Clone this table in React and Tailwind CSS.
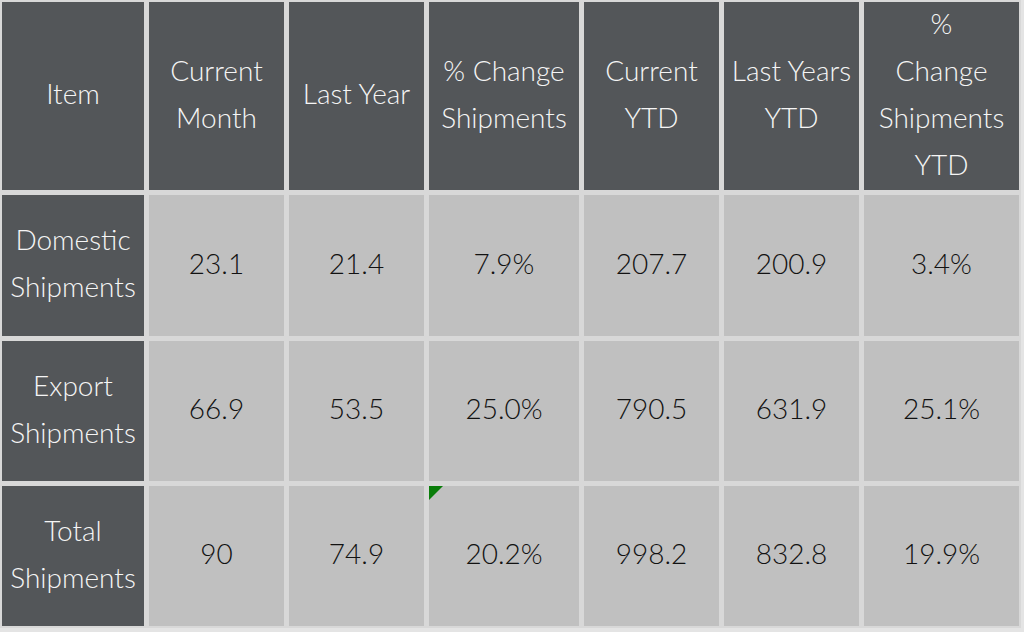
const headers = [
  ['Item'],
  ['Current', 'Month'],
  ['Last Year'],
  ['% Change', 'Shipments'],
  ['Current', 'YTD'],
  ['Last Years', 'YTD'],
  ['%', 'Change', 'Shipments', 'YTD'],
];

const rows = [
  { label: ['Domestic', 'Shipments'], values: ['23.1', '21.4', '7.9%', '207.7', '200.9', '3.4%'] },
  { label: ['Export', 'Shipments'], values: ['66.9', '53.5', '25.0%', '790.5', '631.9', '25.1%'] },
  { label: ['Total', 'Shipments'], values: ['90', '74.9', '20.2%', '998.2', '832.8', '19.9%'], flag: true },
];

function Lines({ lines }) {
  return (
    <div className="flex flex-col items-center">
      {lines.map((line) => (
        <span key={line} className="whitespace-nowrap">
          {line}
        </span>
      ))}
    </div>
  );
}

export default function App() {
  return (
    <div
      className="h-[632px] w-[1024px] bg-[#e4e4e4] text-[28px] font-light leading-[47px]"
      style={{ fontFamily: 'Lato, "Liberation Sans", sans-serif' }}
    >
      <div className="w-[1021px] bg-[#d8d8d8] p-[2px]">
        <div className="grid grid-cols-[142px_135px_135px_150px_135px_135px_155px] grid-rows-[188px_141px_140px_140px] gap-[5px]">
          {headers.map((lines, i) => (
            <div key={i} className="flex items-center justify-center bg-[#535659] pb-[5px] text-center text-[#f5f5f5]">
              <Lines lines={lines} />
            </div>
          ))}
          {rows.map((row) => (
            <div key={row.label[0]} className="contents">
              <div className="flex items-center justify-center bg-[#535659] pb-[5px] text-center text-[#f5f5f5]">
                <Lines lines={row.label} />
              </div>
              {row.values.map((v, i) => (
                <div key={i} className="relative flex items-center justify-center bg-[#c0c0c0] pb-[5px] text-[#121212]">
                  {row.flag && i === 2 && (
                    <svg className="absolute left-0 top-0" width="14" height="14" viewBox="0 0 14 14">
                      <polygon points="0,0 14,0 0,14" fill="#0a7d0a" />
                    </svg>
                  )}
                  {v}
                </div>
              ))}
            </div>
          ))}
        </div>
      </div>
    </div>
  );
}
